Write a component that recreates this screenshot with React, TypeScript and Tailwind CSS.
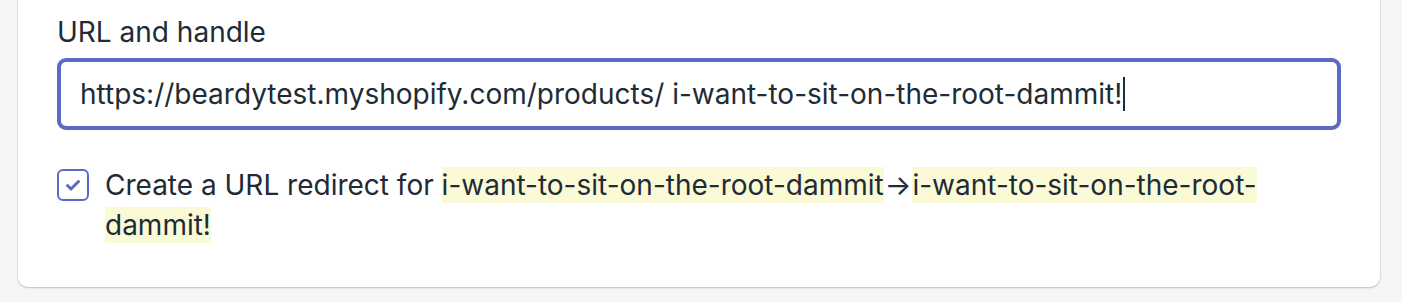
export default function App() {
  const ink = "text-[#212b36]";
  return (
    <div className="h-[302px] w-[1402px] bg-[#f4f6f8] overflow-hidden" style={{ fontFamily: "Inter, 'Noto Sans', sans-serif" }}>
      <div className="ml-[18px] w-[1362px] h-[287px] bg-white rounded-b-[10px] shadow-[0_1px_2px_rgba(63,63,68,0.25),0_0_0_1px_rgba(63,63,68,0.05)] px-[39px] pt-[12px]">
        <div className={`text-[28px] leading-[40px] ${ink}`}>URL and handle</div>
        <div className="mt-[6px] h-[72px] border-[4px] border-[#5c6ac4] rounded-[9px] flex items-center pl-[19px] text-[28px] text-[#212b36]">
          <span>https://beardytest.myshopify.com/products/ i-want-to-sit-on-the-root-dammit!</span>
          <span className="w-[2px] h-[34px] bg-[#212b36] ml-[1px]" />
        </div>
        <div className="mt-[35px] flex items-start gap-[16px]">
          <div className="mt-[4px] w-[32px] h-[32px] shrink-0 border-[2px] border-[#5c6ac4] rounded-[6px] flex items-center justify-center">
            <svg width="20" height="20" viewBox="0 0 20 20" fill="none">
              <path d="M4.5 10.5l3.5 3.5 7.5-7.5" stroke="#5c6ac4" strokeWidth="3" strokeLinecap="round" strokeLinejoin="round" />
            </svg>
          </div>
          <p className={`text-[28px] leading-[40px] ${ink}`}>
            Create a URL redirect for{" "}
            <span className="bg-[#fbfad6] py-[1px]">i-want-to-sit-on-the-root-dammit</span>
            <span className="mx-[1px]">{"\u2192"}</span>
            <span className="bg-[#fbfad6] py-[1px]">i-want-to-sit-on-the-root-dammit!</span>
          </p>
        </div>
      </div>
    </div>
  );
}
